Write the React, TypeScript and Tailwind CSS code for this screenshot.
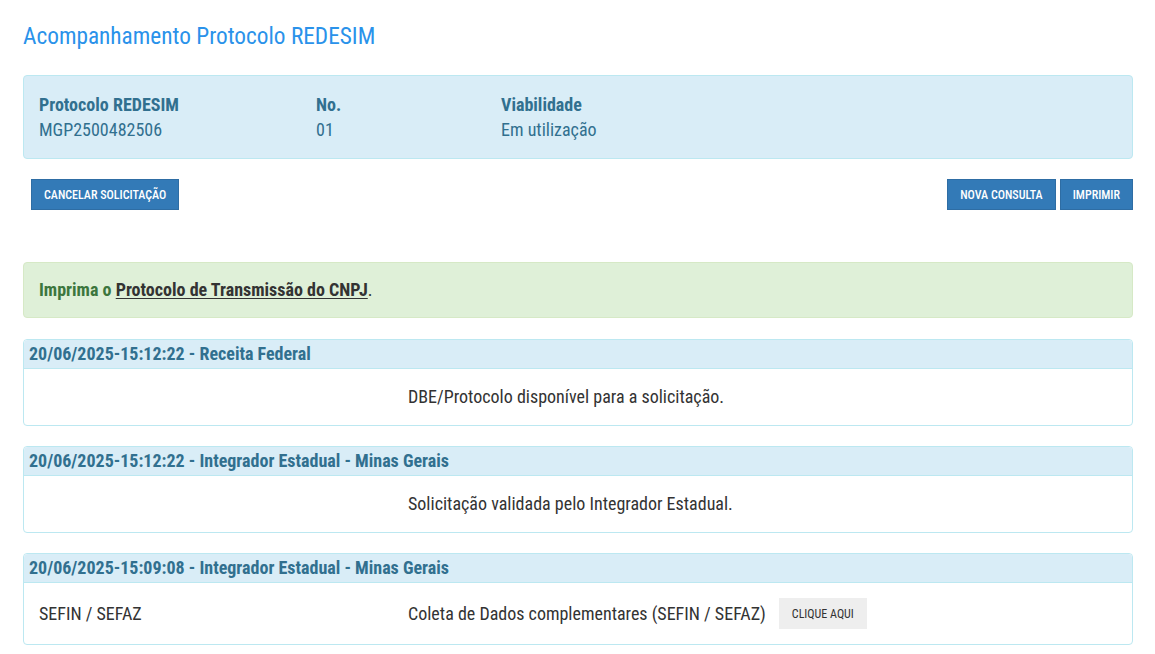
import type { ReactNode } from 'react'

const eventos = [
    {
        titulo: '20/06/2025-15:12:22 - Receita Federal',
        orgao: '',
        mensagem: 'DBE/Protocolo disponível para a solicitação.',
        acao: false,
    },
    {
        titulo: '20/06/2025-15:12:22 - Integrador Estadual - Minas Gerais',
        orgao: '',
        mensagem: 'Solicitação validada pelo Integrador Estadual.',
        acao: false,
    },
    {
        titulo: '20/06/2025-15:09:08 - Integrador Estadual - Minas Gerais',
        orgao: 'SEFIN / SEFAZ',
        mensagem: 'Coleta de Dados complementares (SEFIN / SEFAZ)',
        acao: true,
    },
]

function BotaoAzul({ children }: { children: ReactNode }) {
    return (
        <button className="h-[31px] px-[12px] bg-[#337ab7] border border-[#2e6da4] text-white text-[12px] font-medium uppercase">
            {children}
        </button>
    )
}

function Campo({ rotulo, valor, largura }: { rotulo: string; valor: string; largura: string }) {
    return (
        <div className={largura}>
            <div className="font-bold leading-[25px]">{rotulo}</div>
            <div className="leading-[25px]">{valor}</div>
        </div>
    )
}

export default function App() {
    return (
        <div className="min-h-screen bg-white font-['Roboto_Condensed','Roboto',sans-serif] font-stretch-[75%] text-[18px] text-[#333]">
            <div className="mx-[23px] w-[1110px]">
                <h1 className="pt-[22px] mb-[25px] text-[23.3px] leading-[28px] font-normal font-stretch-100% text-[#2a92ea]">
                    Acompanhamento Protocolo REDESIM
                </h1>

                <div className="flex px-[15px] py-[16px] bg-[#d9edf7] border border-[#bce8f1] rounded text-[#31708f]">
                    <Campo rotulo="Protocolo REDESIM" valor="MGP2500482506" largura="w-[277px]" />
                    <Campo rotulo="No." valor="01" largura="w-[185px]" />
                    <Campo rotulo="Viabilidade" valor="Em utilização" largura="flex-1" />
                </div>

                <div className="flex justify-between mt-[20px] pl-[8px]">
                    <BotaoAzul>Cancelar Solicitação</BotaoAzul>
                    <div className="flex gap-[4px]">
                        <BotaoAzul>Nova Consulta</BotaoAzul>
                        <BotaoAzul>Imprimir</BotaoAzul>
                    </div>
                </div>

                <div className="mt-[52px] mb-[21px] px-[15px] py-[15px] bg-[#dff0d8] border border-[#d6e9c6] rounded text-[#3c763d] font-bold leading-[24px]">
                    Imprima o{' '}
                    <a className="text-[#333] underline underline-offset-2">Protocolo de Transmissão do CNPJ</a>
                    <span className="font-normal text-[#333]">.</span>
                </div>

                <div className="flex flex-col gap-[20px]">
                    {eventos.map((ev, i) => (
                        <div key={i} className="border border-[#bce8f1] rounded bg-white">
                            <div className="h-[29px] px-[5px] bg-[#d9edf7] border-b border-[#bce8f1] rounded-t text-[#31708f] font-bold leading-[28px]">
                                {ev.titulo}
                            </div>
                            <div className="flex items-center px-[15px] py-[15px] min-h-[56px]">
                                <div className="w-[369px]">{ev.orgao}</div>
                                <div className="flex items-center gap-[13px] leading-[26px]">
                                    <span>{ev.mensagem}</span>
                                    {ev.acao && (
                                        <button className="h-[31px] px-[13px] bg-[#eeeeee] text-[12px] font-normal uppercase text-[#333]">
                                            Clique aqui
                                        </button>
                                    )}
                                </div>
                            </div>
                        </div>
                    ))}
                </div>
            </div>
        </div>
    )
}
